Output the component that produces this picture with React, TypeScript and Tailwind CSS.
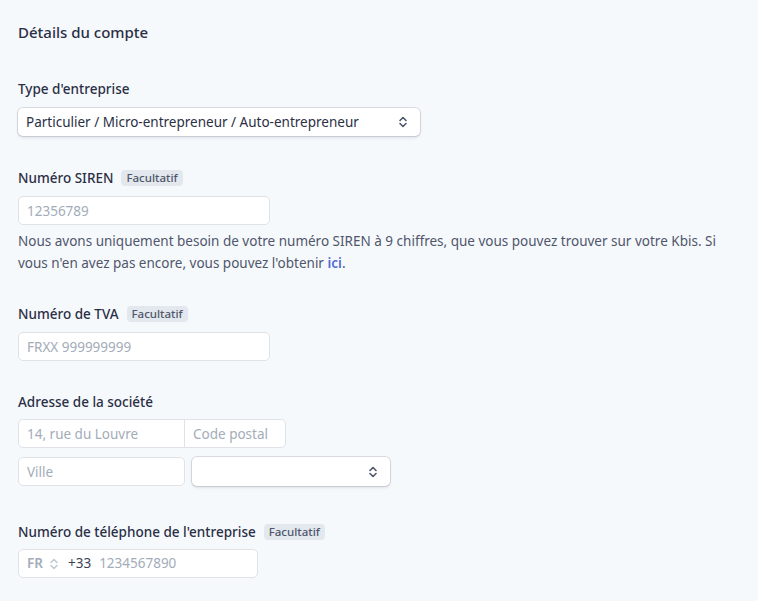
import React from 'react';

const font = { fontFamily: '"Noto Sans", "Open Sans", sans-serif' };

const Badge = () => (
  <span className="ml-2 rounded bg-[#e3e8ee] px-[5px] text-[11.5px] font-medium leading-4 text-[#4f566b]">Facultatif</span>
);

const Chevrons = ({ className = '' }: { className?: string }) => (
  <svg width="10" height="14" viewBox="0 0 10 14" className={className} fill="none" stroke="currentColor" strokeWidth="1.6" strokeLinecap="round" strokeLinejoin="round">
    <path d="M2 5.5 5 2.5 8 5.5" />
    <path d="M2 8.5 5 11.5 8 8.5" />
  </svg>
);

const inputCls =
  'h-[29px] rounded-[5px] border border-[#dfe3e8] bg-white px-2 text-[13.5px] text-[#3c4257] placeholder:text-[#a3acb9] outline-none';

export default function App() {
  return (
    <div className="min-h-[601px] w-full bg-[#f6f9fc] px-[18px] pt-[22px] text-[#3c4257]" style={font}>
      <h2 className="text-[15px] font-medium leading-5 text-[#2a2f45]">Détails du compte</h2>

      <div className="mt-[37px]">
        <label className="block text-[13.5px] font-medium leading-5 text-[#2a2f45]">Type d'entreprise</label>
        <div className="mt-[9px] flex h-[28px] w-[402px] items-center justify-between rounded-[5px] bg-white pl-2 pr-3 text-[13.5px] text-[#2a2f45] shadow-[0_0_0_1px_rgba(60,66,87,0.16),0_2px_3px_rgba(60,66,87,0.12)]">
          <span>Particulier / Micro-entrepreneur / Auto-entrepreneur</span>
          <Chevrons className="text-[#4f566b]" />
        </div>
      </div>

      <div className="mt-[32px]">
        <div className="flex items-center">
          <label className="text-[13.5px] font-medium leading-5 text-[#2a2f45]">Numéro SIREN</label>
          <Badge />
        </div>
        <input className={`${inputCls} mt-[8px] block w-[252px]`} placeholder="12356789" />
        <p className="mt-[5px] w-[720px] text-[13.5px] leading-[22px] text-[#4f566b]">
          Nous avons uniquement besoin de votre numéro SIREN à 9 chiffres, que vous pouvez trouver sur votre Kbis. Si vous n'en avez pas encore, vous pouvez l'obtenir{' '}
          <a className="font-semibold text-[#556cd6]">ici</a>.
        </p>
      </div>

      <div className="mt-[30px]">
        <div className="flex items-center">
          <label className="text-[13.5px] font-medium leading-5 text-[#2a2f45]">Numéro de TVA</label>
          <Badge />
        </div>
        <input className={`${inputCls} mt-[8px] block w-[252px]`} placeholder="FRXX 999999999" />
      </div>

      <div className="mt-[31px]">
        <label className="block text-[13.5px] font-medium leading-5 text-[#2a2f45]">Adresse de la société</label>
        <div className="mt-[7px] flex">
          <input className={`${inputCls} w-[167px] rounded-r-none`} placeholder="14, rue du Louvre" />
          <input className={`${inputCls} -ml-px w-[102px] rounded-l-none`} placeholder="Code postal" />
        </div>
        <div className="mt-[9px] flex gap-[7px]">
          <input className={`${inputCls} w-[167px]`} placeholder="Ville" />
          <div className="flex h-[29px] w-[198px] items-center justify-end rounded-[5px] bg-white pr-3 shadow-[0_0_0_1px_rgba(60,66,87,0.16),0_2px_3px_rgba(60,66,87,0.12)]">
            <Chevrons className="text-[#4f566b]" />
          </div>
        </div>
      </div>

      <div className="mt-[36px]">
        <div className="flex items-center">
          <label className="text-[13.5px] font-medium leading-5 text-[#2a2f45]">Numéro de téléphone de l'entreprise</label>
          <Badge />
        </div>
        <div className="mt-[7px] flex h-[29px] w-[240px] items-center rounded-[5px] border border-[#dfe3e8] bg-white px-2 text-[13.5px]">
          <span className="font-semibold text-[#a3acb9]">FR</span>
          <Chevrons className="ml-[6px] text-[#c1c9d2]" />
          <span className="ml-[9px] text-[#3c4257]">+33</span>
          <span className="ml-2 text-[#a3acb9]">1234567890</span>
        </div>
      </div>
    </div>
  );
}
